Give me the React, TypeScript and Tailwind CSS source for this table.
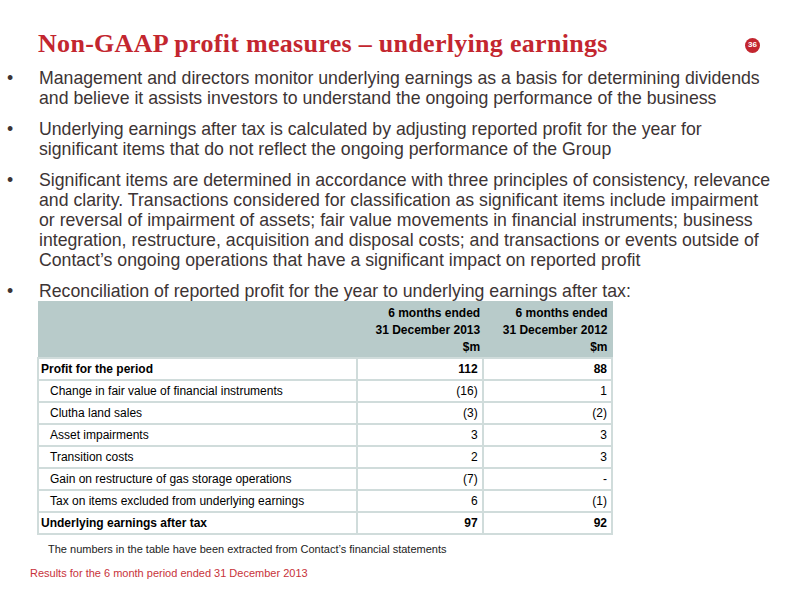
const bullets: string[][] = [
  [
    "Management and directors monitor underlying earnings as a basis for determining dividends",
    "and believe it assists investors to understand the ongoing performance of the business",
  ],
  [
    "Underlying earnings after tax is calculated by adjusting reported profit for the year for",
    "significant items that do not reflect the ongoing performance of the Group",
  ],
  [
    "Significant items are determined in accordance with three principles of consistency, relevance",
    "and clarity. Transactions considered for classification as significant items include impairment",
    "or reversal of impairment of assets; fair value movements in financial instruments; business",
    "integration, restructure, acquisition and disposal costs; and transactions or events outside of",
    "Contact\u2019s ongoing operations that have a significant impact on reported profit",
  ],
  ["Reconciliation of reported profit for the year to underlying earnings after tax:"],
];

type Row = { label: string; a: string; b: string; bold?: boolean };

const rows: Row[] = [
  { label: "Profit for the period", a: "112", b: "88", bold: true },
  { label: "Change in fair value of financial instruments", a: "(16)", b: "1" },
  { label: "Clutha land sales", a: "(3)", b: "(2)" },
  { label: "Asset impairments", a: "3", b: "3" },
  { label: "Transition costs", a: "2", b: "3" },
  { label: "Gain on restructure of gas storage operations", a: "(7)", b: "-" },
  { label: "Tax on items excluded from underlying earnings", a: "6", b: "(1)" },
  { label: "Underlying earnings after tax", a: "97", b: "92", bold: true },
];

export default function App() {
  return (
    <div className="relative w-[800px] h-[600px] bg-white font-['Liberation_Sans',Arial,sans-serif] text-[#3d3434]">
      {/* Title */}
      <div className="flex items-center pl-[38px] pr-[40px] pt-[29px]">
        <h1 className="flex-1 font-['Liberation_Serif',serif] font-bold text-[26px] leading-[30px] text-[#c3262f] tracking-[0.3px]">
          Non-GAAP profit measures – underlying earnings
        </h1>
        <span className="flex items-center justify-center w-[15px] h-[15px] mt-[2px] rounded-full bg-[#c3262f] text-white text-[8px] font-bold">
          36
        </span>
      </div>

      {/* Bullets */}
      <ul className="mt-[9px] flex flex-col gap-[11px]">
        {bullets.map((lines, i) => (
          <li key={i} className="flex text-[17.7px] leading-[20px]">
            <span className="w-[39px] pl-[7px] shrink-0">•</span>
            <div>
              {lines.map((l, j) => (
                <div key={j} className="whitespace-nowrap">
                  {l}
                </div>
              ))}
            </div>
          </li>
        ))}
      </ul>

      {/* Table */}
      <div className="ml-[37px] w-[576px]">
        <table className="w-full border-collapse text-[12px] text-black">
          <colgroup>
            <col className="w-[320px]" />
            <col className="w-[126px]" />
            <col className="w-[130px]" />
          </colgroup>
          <thead>
            <tr className="bg-[#b8cbca]">
              <th className="border border-[#b8cbca]" />
              <th className="border border-[#b8cbca] text-right font-bold leading-[17px] pt-[3px] pb-[1px] pr-[2px] align-top">
                <div>6 months ended</div>
                <div>31 December 2013</div>
                <div>$m</div>
              </th>
              <th className="border border-[#b8cbca] text-right font-bold leading-[17px] pt-[3px] pb-[1px] pr-[4px] align-top">
                <div>6 months ended</div>
                <div>31 December 2012</div>
                <div>$m</div>
              </th>
            </tr>
          </thead>
          <tbody>
            {rows.map((r) => (
              <tr key={r.label} className="h-[22px]">
                <td
                  className={
                    r.bold
                      ? "border-2 border-[#d0dcdb] pl-[2px] font-bold whitespace-nowrap"
                      : "border-2 border-[#d0dcdb] pl-[11px] whitespace-nowrap"
                  }
                >
                  {r.label}
                </td>
                <td
                  className={
                    r.bold
                      ? "border-2 border-[#d0dcdb] text-right pr-[4px] font-bold"
                      : "border-2 border-[#d0dcdb] text-right pr-[4px]"
                  }
                >
                  {r.a}
                </td>
                <td
                  className={
                    r.bold
                      ? "border-2 border-[#d0dcdb] text-right pr-[4px] font-bold"
                      : "border-2 border-[#d0dcdb] text-right pr-[4px]"
                  }
                >
                  {r.b}
                </td>
              </tr>
            ))}
          </tbody>
        </table>
      </div>

      <p className="ml-[48px] mt-[7px] text-[11px] leading-[14px] text-[#222]">
        The numbers in the table have been extracted from Contact’s financial statements
      </p>
      <p className="ml-[30px] mt-[10px] text-[11px] leading-[14px] text-[#c8323a]">
        Results for the 6 month period ended 31 December 2013
      </p>
    </div>
  );
}
